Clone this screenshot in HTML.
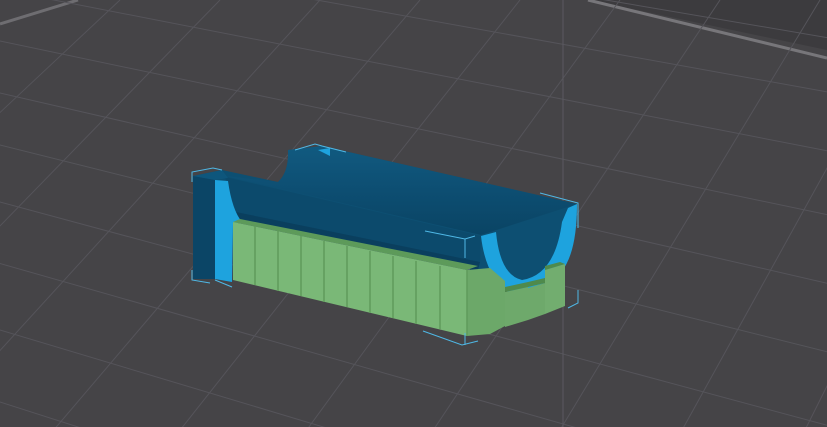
<!DOCTYPE html>
<html><head><meta charset="utf-8"><style>
html,body{margin:0;padding:0;background:#454447;overflow:hidden;width:827px;height:427px}
svg{display:block;position:absolute;left:0;top:0}
</style></head><body>
<svg width="827" height="427" viewBox="0 0 827 427" xmlns="http://www.w3.org/2000/svg">
<defs>
<linearGradient id="inner" x1="0" y1="0" x2="0" y2="1">
<stop offset="0" stop-color="#115a80"/>
<stop offset="0.5" stop-color="#0d4e72"/>
<stop offset="1" stop-color="#0a4464"/>
</linearGradient>
</defs>
<rect width="827" height="427" fill="#454447"/>
<polygon points="590,0 827,0 827,50" fill="#3c3b3e"/>
<line x1="588" y1="0" x2="827" y2="58" stroke="#77767a" stroke-width="3"/>
<line x1="0" y1="24" x2="78" y2="0" stroke="#6e6d71" stroke-width="3"/>
<g stroke="#55545a" stroke-width="1" fill="none">
<line x1="-100" y1="20" x2="900" y2="230"/>
<line x1="-100" y1="70" x2="900" y2="300"/>
<line x1="-100" y1="120" x2="900" y2="370"/>
<line x1="-100" y1="175" x2="900" y2="445"/>
<line x1="-100" y1="235" x2="900" y2="520"/>
<line x1="-100" y1="300" x2="900" y2="600"/>
<line x1="-100" y1="370" x2="900" y2="690"/>
<line x1="-100" y1="-30" x2="900" y2="165"/>
<line x1="-100" y1="-75" x2="900" y2="105"/>
<line x1="-100" y1="-120" x2="900" y2="50"/>
<line x1="-100" y1="-160" x2="900" y2="0"/>
<line x1="120" y1="0" x2="-200" y2="300"/>
<line x1="220" y1="0" x2="-150" y2="380"/>
<line x1="320" y1="0" x2="-100" y2="460"/>
<line x1="420" y1="0" x2="-40" y2="540"/>
<line x1="520" y1="0" x2="30" y2="620"/>
<line x1="620" y1="0" x2="110" y2="700"/>
<line x1="720" y1="0" x2="200" y2="780"/>
<line x1="820" y1="0" x2="300" y2="860"/>
<line x1="920" y1="0" x2="400" y2="940"/>
<line x1="1020" y1="0" x2="510" y2="1020"/>
<line x1="1120" y1="0" x2="620" y2="1100"/>
<line x1="1220" y1="0" x2="740" y2="1180"/>
<line x1="1320" y1="0" x2="860" y2="1260"/>
</g>
<line x1="563" y1="0" x2="563" y2="427" stroke="#5a5960" stroke-width="1"/>

<path d="M193,176 L222,170 L278,182 Q289,172 288,150 L322,146 L577,204 Q575,270 548,282 L512,294 L470,272 L233,222 L232,282 L215,279 L193,279 Z" fill="#0d4f72"/>
<path d="M225,176 L278,182 Q289,172 288,150 L322,146 L577,204 L481,235 Z" fill="url(#inner)"/>
<polygon points="225,177 481,236 480,262 236,212" fill="#0c4a6c"/>
<polygon points="236,212 480,262 478,270 470,272 233,222" fill="#0a3f5e"/>
<polygon points="240,222 470,265 470,272 236,226" fill="#4a5a80"/>
<polygon points="193,176 215,180 215,279 193,279" fill="#0b4566"/>
<polygon points="193,176 222,170 228,178 215,180" fill="#0e567c"/>
<path d="M215,180 L228,181 Q232,210 242,222 L233,224 L232,282 L215,279 Z" fill="#1ea3de"/>
<polygon points="318,150 330,148 330,156" fill="#1ea3de"/>
<path d="M481,236 L496,232 Q500,275 522,280 Q555,275 562,222 L568,208 L577,204 Q577,270 548,282 L512,294 Q486,280 481,236 Z" fill="#1ea3de"/>

<polygon points="233,222 467,270 467,336 233,280" fill="#7ab877"/>
<polygon points="233,222 240,219 478,266 467,270" fill="#5d9a5a"/>
<polygon points="467,270 490,268 505,281 505,326 490,334 467,336" fill="#6ca869"/>
<g stroke="#5f9b5c" stroke-width="1.5">
<line x1="255" y1="226" x2="255" y2="285"/>
<line x1="278" y1="231" x2="278" y2="291"/>
<line x1="301" y1="236" x2="301" y2="296"/>
<line x1="324" y1="241" x2="324" y2="302"/>
<line x1="347" y1="246" x2="347" y2="307"/>
<line x1="370" y1="251" x2="370" y2="313"/>
<line x1="393" y1="256" x2="393" y2="318"/>
<line x1="416" y1="261" x2="416" y2="324"/>
<line x1="440" y1="266" x2="440" y2="329"/>
<line x1="467" y1="270" x2="467" y2="336"/>
</g>
<polygon points="505,292 528,287 528,320 505,327" fill="#6ea96b"/>
<polygon points="528,288 545,283 545,314 528,320" fill="#6ea96b"/>
<polygon points="545,270 565,264 565,306 545,314" fill="#72ad6f"/>
<polygon points="505,292 505,287 528,282 545,278 545,283 528,287" fill="#4f8a4c"/>
<polygon points="545,270 545,266 560,262 565,264" fill="#4f8a4c"/>

<g stroke="#4fb8e6" stroke-width="1" fill="none">
<path d="M192,182 L192,172 L213,168 L222,170"/>
<path d="M192,270 L192,280 L210,283"/>
<path d="M215,280 L232,287"/>
<path d="M295,150 L315,144 L322,146 L346,152"/>
<path d="M540,193 L578,203 L578,228"/>
<path d="M578,290 L578,303 L568,308"/>
<path d="M425,231 L465,239 L475,236"/>
<path d="M465,239 L465,258"/>
<path d="M423,331 L462,345 L478,341"/>
<path d="M465,333 L465,345"/>
</g>
</svg>
</body></html>
